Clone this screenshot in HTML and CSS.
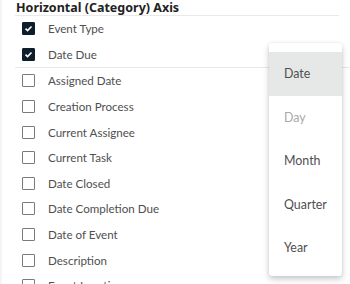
FILE: index.html
```html
<!DOCTYPE html>
<html lang="en">
<head>
    <meta charset="UTF-8">
    <meta name="viewport" content="width=device-width, initial-scale=1.0">
    <title>Axis Fields</title>
    <link rel="stylesheet" href="styles.css">
</head>
<body>
    <div class="panel">
        <div class="section-title">Horizontal (Category) Axis</div>

        <div class="group selected">
            <label class="field"><span class="box checked"><svg viewBox="0 0 14 14"><path d="M3.2 7.2 L5.8 9.7 L10.8 4.4" /></svg></span>Event Type</label>
            <label class="field"><span class="box checked"><svg viewBox="0 0 14 14"><path d="M3.2 7.2 L5.8 9.7 L10.8 4.4" /></svg></span>Date Due</label>
        </div>

        <div class="group">
            <label class="field"><span class="box"></span>Assigned Date</label>
            <label class="field"><span class="box"></span>Creation Process</label>
            <label class="field"><span class="box"></span>Current Assignee</label>
            <label class="field"><span class="box"></span>Current Task</label>
            <label class="field"><span class="box"></span>Date Closed</label>
            <label class="field"><span class="box"></span>Date Completion Due</label>
            <label class="field"><span class="box"></span>Date of Event</label>
            <label class="field"><span class="box"></span>Description</label>
            <label class="field"><span class="box"></span>Event Location</label>
        </div>

        <!-- date grouping menu for "Date Due" -->
        <ul class="menu">
            <li class="menu-item active">Date</li>
            <li class="menu-item disabled">Day</li>
            <li class="menu-item">Month</li>
            <li class="menu-item">Quarter</li>
            <li class="menu-item">Year</li>
        </ul>
    </div>
</body>
</html>
```

FILE: styles.css
```css
html, body {
    margin: 0;
    padding: 0;
    background: #fff;
    overflow: hidden;
    height: 284px;
}

body {
    font-family: Lato, "Noto Sans", sans-serif;
    color: #555;
}

.panel {
    position: relative;
    height: 284px;
    overflow: hidden;
    padding-left: 15px;
    box-shadow: inset 3px 0 3px -2px rgba(0, 0, 0, 0.08);
}

.section-title {
    width: 323px;
    height: 15px;
    line-height: 16px;
    padding-left: 1px;
    font-family: "Noto Sans", sans-serif;
    font-size: 12.5px;
    font-weight: bold;
    color: #222;
    border-bottom: 1px solid #e9e9e9;
}

.group {
    display: flex;
    flex-direction: column;
}

.group.selected {
    border-bottom: 1px solid #e9e9e9;
}

.field {
    display: flex;
    align-items: center;
    height: 25.6px;
    padding-left: 7px;
    font-size: 11.6px;
    color: #4f4f4f;
}

.box {
    width: 11px;
    height: 11px;
    border: 1.5px solid #7a7a7a;
    border-radius: 1px;
    margin-right: 13px;
    flex-shrink: 0;
    display: flex;
}

.box.checked {
    background: #0e1d2b;
    border-color: #0e1d2b;
}

.box svg {
    width: 11px;
    height: 11px;
}

.box svg path {
    fill: none;
    stroke: #fff;
    stroke-width: 2;
}

.menu {
    position: absolute;
    left: 269px;
    top: 43px;
    width: 73px;
    margin: 0;
    padding: 9px 0 6px;
    list-style: none;
    background: #fff;
    border-radius: 3px;
    box-shadow: 0 3px 6px rgba(0, 0, 0, 0.22), 0 0 2px rgba(0, 0, 0, 0.08);
}

.menu-item {
    height: 43.5px;
    line-height: 43.5px;
    padding-left: 15px;
    font-size: 12.4px;
    color: #4f4f4f;
}

.menu-item.active {
    background: #e6e8e8;
}

.menu-item.disabled {
    color: #a8a8a8;
}
```
